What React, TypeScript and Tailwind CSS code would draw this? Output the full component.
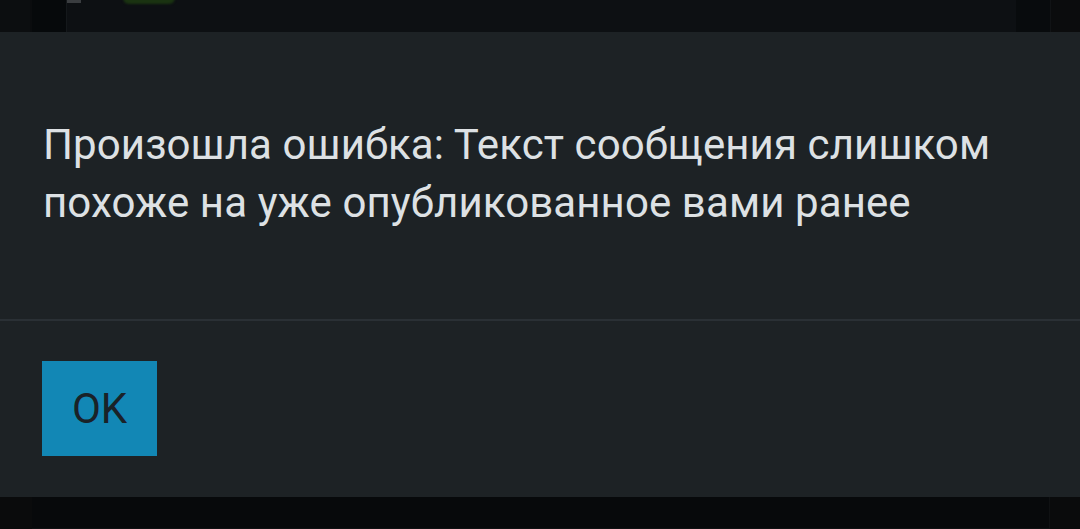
export default function App() {
  return (
    <div className="flex h-[529px] w-[1080px] flex-col overflow-hidden bg-[#0b0d0f] font-['Roboto',sans-serif]">
      {/* app content peeking out behind the dialog */}
      <div className="flex h-[32px] shrink-0">
        <div className="w-[30px] bg-[#0c0e10]" />
        <div className="w-[2px] bg-[#0a0c0e]" />
        <div className="w-[34px] bg-[#06090b]" />
        <div className="relative flex-1 border-l border-[#14181b] bg-[#0d1013]">
          <div className="absolute left-0 top-0 h-[3px] w-[14px] bg-[#3a3d40]" />
          <div className="absolute left-[56px] top-[-2px] h-[6px] w-[52px] rounded-b-full bg-[#1a3311] blur-[1px]" />
        </div>
        <div className="w-[34px] bg-[#080b0d]" />
        <div className="w-[30px] border-l border-[#111315] bg-[#0b0c0d]" />
      </div>

      {/* dialog */}
      <div className="flex h-[465px] shrink-0 flex-col bg-[#1d2225]">
        <div className="flex h-[287px] items-center px-[43px] pb-[4px]">
          <p className="text-[42px] leading-[58px] tracking-[0.1px] text-[#dde1e4]">
            Произошла ошибка: Текст сообщения слишком
            <br />
            похоже на уже опубликованное вами ранее
          </p>
        </div>
        <div className="h-[2px] bg-[#2a3035]" />
        <div className="flex flex-1 items-start px-[42px] pt-[40px]">
          <button className="flex h-[95px] w-[115px] items-center justify-center bg-[#1287b5] text-[42px] text-[#1a2228]">
            OK
          </button>
        </div>
      </div>

      <div className="flex flex-1">
        <div className="w-[32px] bg-[#0a0b0c]" />
        <div className="flex-1 border-b border-r border-[#0f1113] bg-[#07090b]" />
        <div className="w-[30px] bg-[#0a0b0c]" />
      </div>
    </div>
  )
}
